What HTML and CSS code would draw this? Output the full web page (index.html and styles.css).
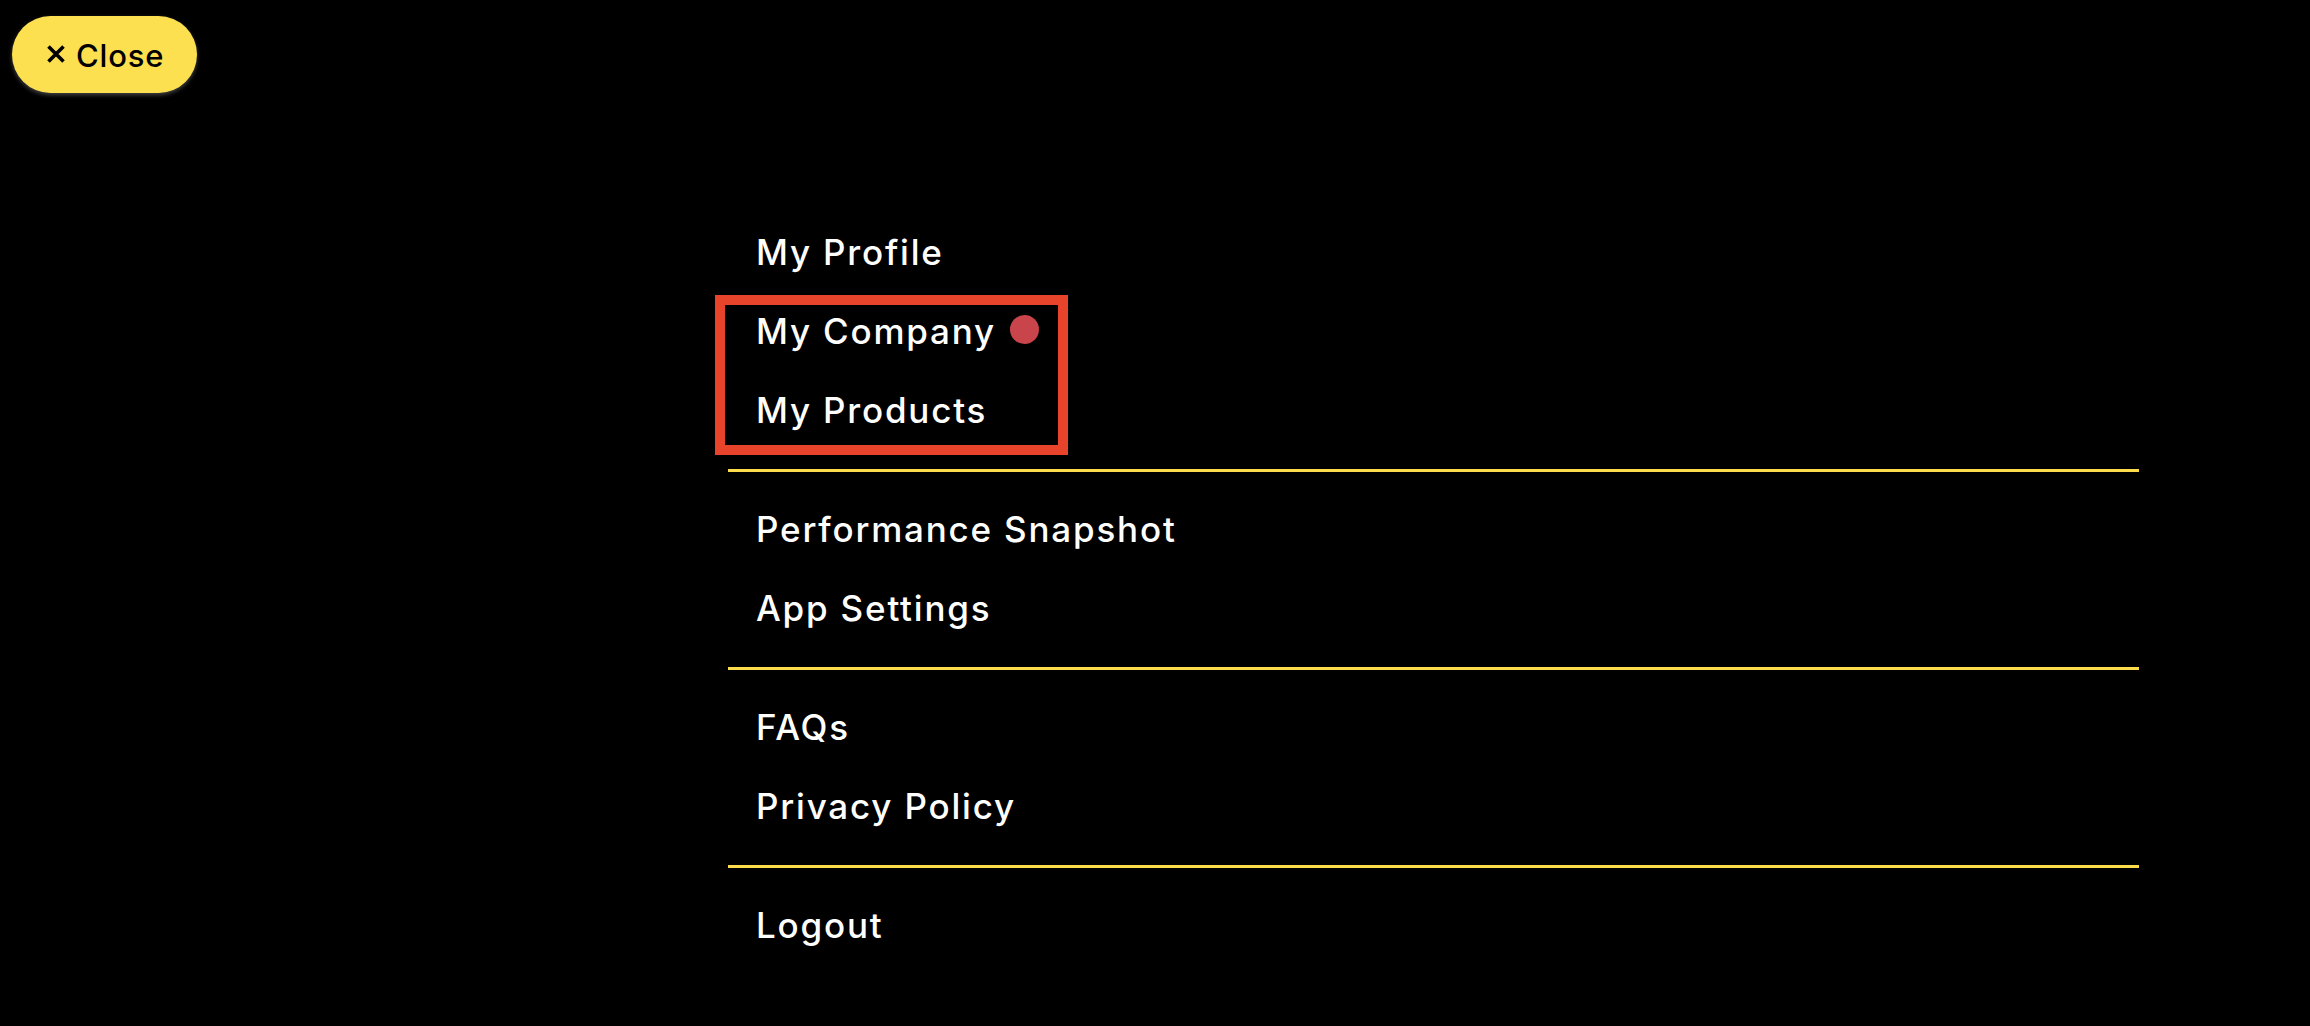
FILE: index.html
```html
<!DOCTYPE html>
<html lang="en">
<head>
<meta charset="utf-8">
<title>Menu</title>
<link rel="stylesheet" href="styles.css">
</head>
<body>
<header class="top">
  <button class="close-btn" type="button">
    <svg class="close-icon" viewBox="0 0 18 18" width="18" height="18" aria-hidden="true">
      <path d="M1.5 1.5 L16.5 16.5 M16.5 1.5 L1.5 16.5" stroke="#000" stroke-width="3.6" fill="none"/>
    </svg>
    <span>Close</span>
  </button>
</header>
<nav class="menu">
  <div class="group">
    <a class="item" href="#">My Profile</a>
    <div class="highlighted">
      <a class="item" href="#">My Company <span class="dot"></span></a>
      <a class="item" href="#">My Products</a>
    </div>
  </div>
  <div class="group">
    <a class="item" href="#">Performance Snapshot</a>
    <a class="item" href="#">App Settings</a>
  </div>
  <div class="group">
    <a class="item" href="#">FAQs</a>
    <a class="item" href="#">Privacy Policy</a>
  </div>
  <div class="group last">
    <a class="item" href="#">Logout</a>
  </div>
</nav>
</body>
</html>
```
FILE: styles.css
```css
html, body {
  margin: 0;
  padding: 0;
  background: #000;
}
body {
  font-family: Inter, "Noto Sans", "Liberation Sans", sans-serif;
  color: #fff;
  min-height: 1026px;
}
.top {
  display: flex;
  padding: 16px 0 0 12px;
}
.close-btn {
  display: flex;
  align-items: center;
  justify-content: flex-start;
  gap: 11px;
  width: 185px;
  height: 77px;
  border: none;
  border-radius: 39px;
  background: #fce04f;
  box-shadow: 0 2px 4px rgba(150, 150, 150, 0.45);
  font-family: Inter, "Noto Sans", sans-serif;
  font-size: 31px;
  font-weight: 500;
  letter-spacing: 0.8px;
  color: #000;
  padding: 2px 0 0 35px;
  cursor: pointer;
}
.close-icon {
  width: 18px;
  height: 18px;
  flex: none;
  margin-top: -3px;
}
.menu {
  margin: 102px 0 0 728px;
  width: 1411px;
  display: flex;
  flex-direction: column;
}
.group {
  display: flex;
  flex-direction: column;
  padding: 19px 0 18px;
  border-bottom: 3px solid #fcdc4a;
}
.group.last {
  border-bottom: none;
}
.item {
  display: flex;
  align-items: center;
  box-sizing: border-box;
  height: 79px;
  padding: 0 0 3px 28px;
  font-size: 35px;
  font-weight: 500;
  letter-spacing: 1.8px;
  color: #fff;
  text-decoration: none;
}
.highlighted {
  position: relative;
  display: flex;
  flex-direction: column;
}
.highlighted::after {
  content: "";
  position: absolute;
  top: 2px;
  left: -13px;
  width: 353px;
  height: 160px;
  box-sizing: border-box;
  border: 10px solid #e8432b;
  pointer-events: none;
}
.dot {
  display: inline-block;
  width: 29px;
  height: 29px;
  margin-left: 14px;
  border-radius: 50%;
  background: #c9444b;
  align-self: center;
  position: relative;
  top: -2px;
}
```
